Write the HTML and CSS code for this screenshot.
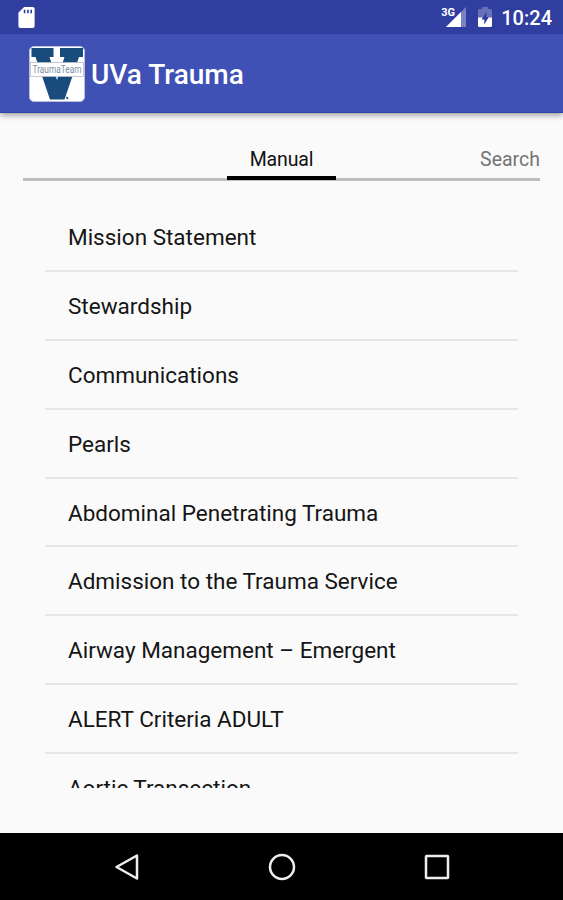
FILE: index.html
```html
<!DOCTYPE html>
<html lang="en">
<head>
<meta charset="utf-8">
<title>UVa Trauma</title>
<link rel="stylesheet" href="styles.css">
</head>
<body>
<div class="screen">
  <header class="top">
    <div class="status">
      <svg class="sd" width="17" height="21" viewBox="0 0 17 22"><path d="M6 0H15Q17 0 17 2V20Q17 22 15 22H2Q0 22 0 20V6Z" fill="#fff"/><path d="M6.500 3v3.500M10 3v3.500M13.400 3v3.500" stroke="#303f9f" stroke-width="1.700"/></svg>
      <div class="status-right">
        <div class="signal">
          <span class="net">3G</span>
          <svg width="20" height="20" viewBox="0 0 20 20"><path d="M20 0V20H0Z" fill="#7a84c4"/><path d="M15 5V20H0Z" fill="#fff"/></svg>
        </div>
        <svg class="battery" width="14" height="20" viewBox="0 0 14 20"><path d="M4 0h6v2h2.500Q14 2 14 3.500V11H0V3.500Q0 2 1.500 2H4Z" fill="#6671b8"/><path d="M0 10.500H14V18.500Q14 20 12.500 20H1.500Q0 20 0 18.500Z" fill="#fff"/><path d="M8.300 5L3.500 12.500H6.300V17.500L10.800 10H8.300Z" fill="#303f9f"/></svg>
        <span class="clock">10:24</span>
      </div>
    </div>
    <div class="appbar">
      <svg class="logo" width="56" height="56" viewBox="0 0 56 56">
        <rect x="0.500" y="0.500" width="55" height="55" rx="4.500" fill="#fff" stroke="#b9bfdc"/>
        <path d="M2.500 2H24.500V11H20.500L28 34L35.500 11H31V2H54V11H50L35.500 53.500H21L6.500 11H2.500Z" fill="#194b7d"/>
        <path d="M37.500 51l1.500 2" stroke="#194b7d" stroke-width="1.500"/>
        <rect x="1.500" y="16.500" width="53" height="14" fill="#fff" stroke="#b8bcc5" stroke-width="0.800"/>
        <text x="28" y="27" text-anchor="middle" textLength="49" lengthAdjust="spacingAndGlyphs" class="logo-text">TraumaTeam</text>
      </svg>
      <h1>UVa Trauma</h1>
    </div>
  </header>
  <main>
    <nav class="tabs">
      <span class="tab active">Manual</span>
      <span class="tab next">Search</span>
    </nav>
    <ul class="list">
      <li>Mission Statement</li>
      <li>Stewardship</li>
      <li>Communications</li>
      <li>Pearls</li>
      <li>Abdominal Penetrating Trauma</li>
      <li>Admission to the Trauma Service</li>
      <li>Airway Management – Emergent</li>
      <li>ALERT Criteria ADULT</li>
      <li>Aortic Transection</li>
    </ul>
  </main>
  <footer class="navbar">
    <svg width="28" height="28" viewBox="0 0 28 28"><path d="M24 2.500V25.500L3.500 14Z"/></svg>
    <svg width="28" height="28" viewBox="0 0 28 28"><circle cx="14" cy="14" r="12"/></svg>
    <svg width="28" height="28" viewBox="0 0 28 28"><rect x="3" y="3" width="22" height="22" rx="0.500"/></svg>
  </footer>
</div>
</body>
</html>
```
FILE: styles.css
```css
* { box-sizing: border-box; }
body {
  margin: 0;
  font-family: Roboto, "Liberation Sans", sans-serif;
}
.screen {
  width: 563px;
  height: 900px;
  display: flex;
  flex-direction: column;
  overflow: hidden;
  background: #fafafa;
}
.top {
  height: 113px;
  flex: none;
  background: #3f51b5;
  border-bottom: 1px solid #3044a8;
  box-shadow: 0 2px 6px rgba(0, 0, 0, 0.4);
}
.status {
  height: 34px;
  background: #303f9f;
  display: flex;
  justify-content: space-between;
  align-items: flex-start;
  padding: 7px 11px 0 18px;
}
.status-right { display: flex; align-items: flex-start; }
.signal { display: flex; margin-right: 12px; }
.signal svg { display: block; }
.net {
  width: 13px;
  margin-right: -8px;
  font-size: 11px;
  font-weight: 700;
  line-height: 12px;
  color: #fff;
  z-index: 1;
}
.battery { margin-right: 9px; }
.clock {
  font-size: 20px;
  font-weight: 500;
  line-height: 24px;
  color: #fff;
  margin-top: -1px;
}
.appbar {
  height: 78px;
  display: flex;
  align-items: center;
  padding: 1px 0 0 29px;
}
.logo { display: block; }
.logo-text { font: 10px Roboto, sans-serif; fill: #7d8da4; }
h1 {
  margin: 3px 0 0 6px;
  font-size: 28px;
  font-weight: 500;
  line-height: 34px;
  color: #fff;
}
main { flex: 1; min-height: 0; }
.tabs {
  height: 46px;
  margin: 22px 23px 0;
  border-bottom: 3px solid #bebebe;
  display: grid;
  grid-template-columns: 1fr 109px 1fr;
  font-size: 19.500px;
  line-height: 24px;
}
.tab { padding-top: 13px; }
.active {
  grid-column: 2;
  height: 45px;
  text-align: center;
  letter-spacing: -0.150px;
  color: #111;
  border-bottom: 4px solid #000;
}
.next { text-align: right; color: #737373; }
.list {
  list-style: none;
  margin: 22px 45px 0;
  padding: 0;
  height: 585px;
  overflow: hidden;
}
.list li {
  height: 68.880px;
  border-bottom: 2px solid #e6e6e6;
  padding: 20px 0 0 23px;
  font-size: 22.500px;
  line-height: 28px;
  color: #151515;
}
.navbar {
  height: 67px;
  flex: none;
  background: #000;
  display: flex;
  justify-content: center;
  align-items: center;
  gap: 127px;
}
.navbar svg {
  fill: none;
  stroke: #eee;
  stroke-width: 2.500;
  stroke-linejoin: round;
}
```
